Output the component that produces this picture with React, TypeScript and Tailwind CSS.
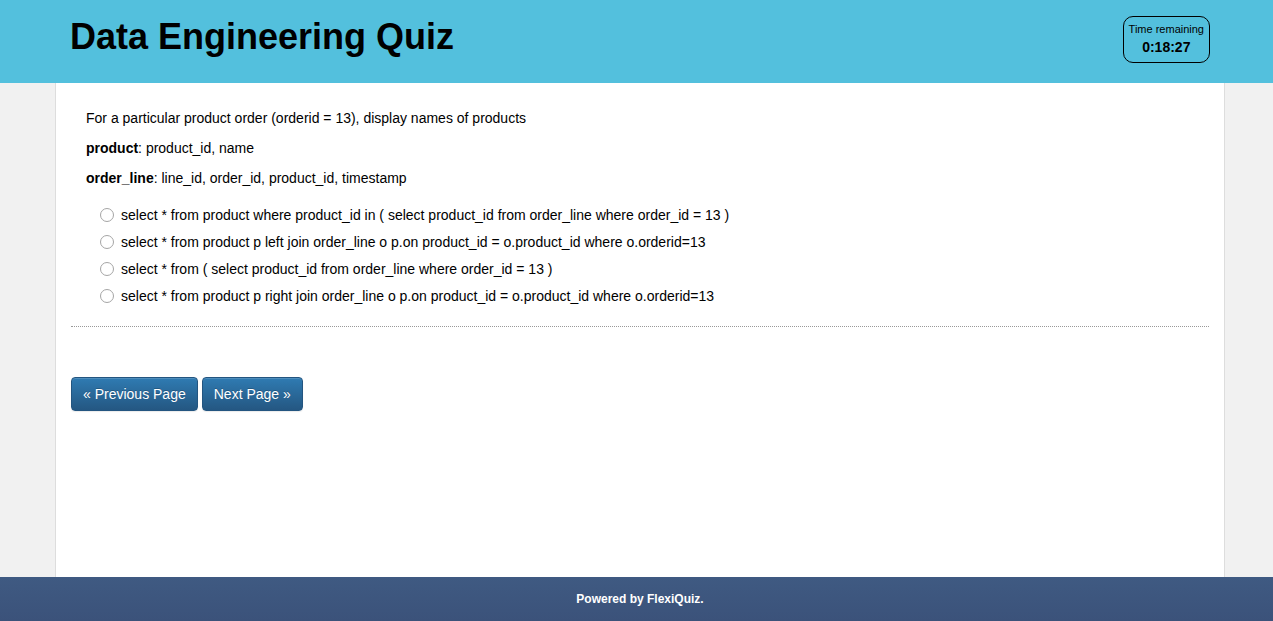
import { useState } from "react";

const answers = [
  "select * from product where product_id in ( select product_id from order_line where order_id = 13 )",
  "select * from product p left join order_line o p.on product_id = o.product_id where o.orderid=13",
  "select * from ( select product_id from order_line where order_id = 13 )",
  "select * from product p right join order_line o p.on product_id = o.product_id where o.orderid=13",
];

const navButton =
  "h-[34px] cursor-pointer rounded-[4px] border border-[#235580] bg-linear-to-b from-[#2f7bb2] to-[#245782] px-[11px] text-sm text-white shadow-[inset_0_1px_0_rgba(255,255,255,0.15),0_1px_1px_rgba(0,0,0,0.08)] [text-shadow:0_-1px_0_rgba(0,0,0,0.2)]";

export default function App() {
  const [selected, setSelected] = useState<number | null>(null);

  return (
    <div className="flex min-h-screen flex-col bg-[#f1f1f1] font-['Liberation_Sans',Arial,sans-serif] text-sm text-black">
      <header className="bg-[#53c0dd] pl-[7px]">
        <div className="mx-auto flex h-[83px] max-w-[1170px] items-start justify-between px-[15px]">
          <h1 className="pt-[17px] text-4xl font-bold">Data Engineering Quiz</h1>
          <div className="mt-4 flex h-[47px] flex-col items-center rounded-[10px] border border-black px-[5px] pt-1">
            <span className="text-[11px] leading-4">Time remaining</span>
            <span className="font-bold leading-5">0:18:27</span>
          </div>
        </div>
      </header>

      <div className="flex grow pl-[7px]">
        <main className="mx-auto w-full max-w-[1170px] border-x border-[#dddddd] bg-white px-[15px] pt-[25px]">
          <form onSubmit={(e) => e.preventDefault()}>
            <fieldset className="border-b border-dotted border-[#999999] pb-[17px]">
              <legend className="flex flex-col gap-[10px] px-[15px] pb-[13px]">
                <span>For a particular product order (orderid = 13), display names of products</span>
                <span><b>product</b>: product_id, name</span>
                <span><b>order_line</b>: line_id, order_id, product_id, timestamp</span>
              </legend>
              <div className="flex flex-col items-start px-[29px]">
                {answers.map((answer, i) => (
                  <label key={answer} className="flex h-[27px] items-center gap-[7px]">
                    <input
                      type="radio"
                      name="answer"
                      checked={selected === i}
                      onChange={() => setSelected(i)}
                      className="mt-px size-[14px] appearance-none rounded-full border border-[#a5a5a5] bg-white checked:border-4 checked:border-[#265a88]"
                    />
                    <span>{answer}</span>
                  </label>
                ))}
              </div>
            </fieldset>
            <div className="flex gap-1 pt-[50px]">
              <button type="button" className={navButton}>« Previous Page</button>
              <button type="button" className={navButton}>Next Page »</button>
            </div>
          </form>
        </main>
      </div>

      <footer className="flex h-11 items-center justify-center bg-linear-to-b from-[#3f5a82] to-[#3b527a] pl-[7px] text-xs font-bold text-white">
        <a href="#flexiquiz">Powered by FlexiQuiz.</a>
      </footer>
    </div>
  );
}
